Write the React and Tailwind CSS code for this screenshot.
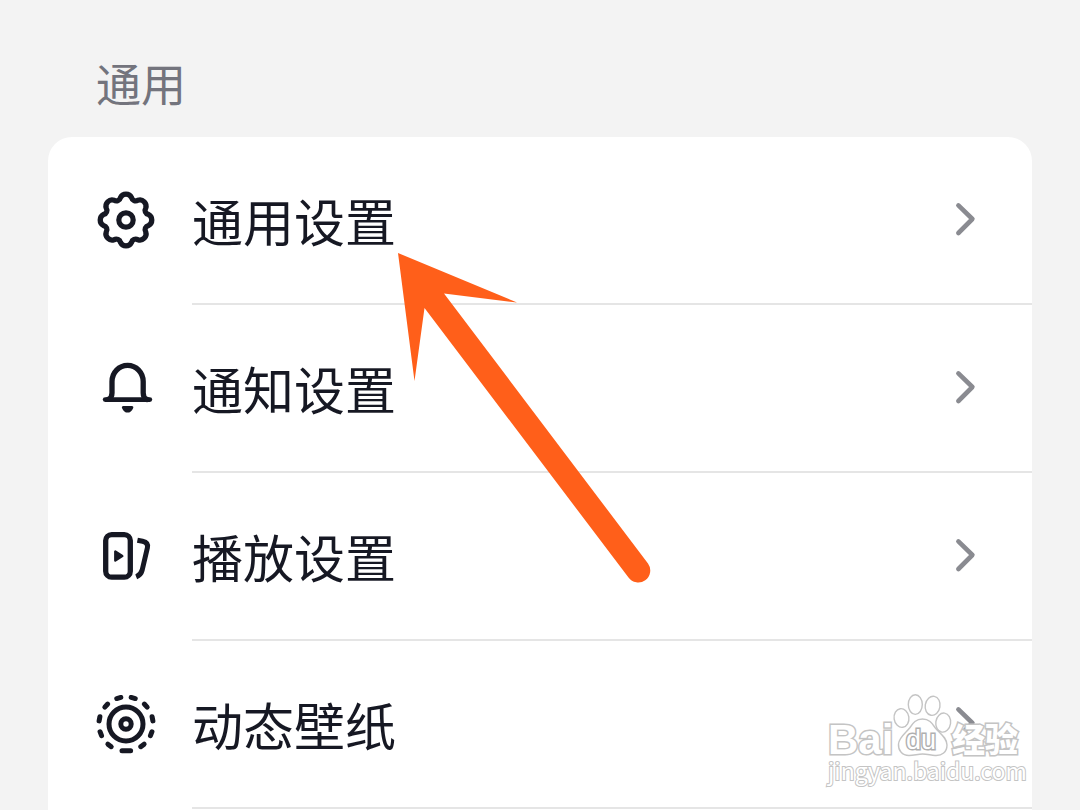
const cjk = "font-['Noto_Sans_CJK_SC',sans-serif]"

// eight round teeth around a centre of 30,30
const gearPath = () => {
    const at = (deg) => {
        const a = (deg * Math.PI) / 180
        return `${(30 + 23 * Math.cos(a)).toFixed(2)} ${(30 + 23 * Math.sin(a)).toFixed(2)}`
    }
    let d = `M${at(-14)}`
    for (let deg = 0; deg < 360; deg += 45) {
        d += `A6.2 6.2 0 0 1 ${at(deg + 14)}A4.2 4.2 0 0 0 ${at(deg + 31)}`
    }
    return `${d}Z`
}

function Icon({ children }) {
    return (
        <svg
            viewBox="0 1 60 60"
            className="size-15 shrink-0"
            fill="none"
            stroke="currentColor"
            strokeWidth="5.3"
            strokeLinecap="round"
            strokeLinejoin="round"
            aria-hidden="true"
        >
            {children}
        </svg>
    )
}

function GearIcon() {
    return (
        <Icon>
            <path d={gearPath()} />
            <circle cx="30" cy="30" r="7.2" strokeWidth="5.2" />
        </Icon>
    )
}

function BellIcon() {
    return (
        <Icon>
            <path d="M9.2 41.6H53.8" strokeWidth="4.8" />
            <path d="M12 41.4C15 40.4 16 38 16 35V23.5A15.6 16.2 0 0 1 47.2 23.5V35C47.2 38 48.2 40.4 51 41.4" />
            <path
                d="M27.4 48H35.8C37.2 48 37.8 49.2 37 50.4C35.8 53 34 54.6 31.6 54.6S27.4 53 26.2 50.4C25.4 49.2 26 48 27.4 48Z"
                fill="currentColor"
                stroke="none"
            />
        </Icon>
    )
}

function PlayIcon() {
    return (
        <Icon>
            <rect x="9.7" y="8.6" width="24.6" height="42.6" rx="6" />
            <path
                d="M19.3 25.6V34.6L26.3 30.1Z"
                fill="currentColor"
                strokeWidth="2.4"
            />
            <path
                d="M41.4 14.3L46.6 15.3C50.6 16.2 52.2 18.2 51.4 21.8L46.2 44C45.2 47.8 43.8 49.4 40.2 50.8"
                strokeWidth="5"
                strokeLinecap="butt"
            />
        </Icon>
    )
}

function LiveIcon() {
    return (
        <Icon>
            <circle cx="30" cy="30" r="17" strokeWidth="5" />
            <circle cx="30" cy="30" r="5.2" strokeWidth="5" />
            {[15.5, 47, 79, 111, 142.5, 217.5, 249, 281, 313, 344.5].map((deg) => (
                <path key={deg} d="M27.9 3H32.1" strokeWidth="5" transform={`rotate(${deg} 30 30)`} />
            ))}
            <path d="M26 56.8H34.6" strokeWidth="5" />
        </Icon>
    )
}

function Chevron() {
    return (
        <svg
            viewBox="0 0 24 40"
            className="h-10 w-6 shrink-0 text-[#8a8b91]"
            fill="none"
            stroke="currentColor"
            strokeWidth="4.6"
            strokeLinecap="round"
            strokeLinejoin="round"
            aria-hidden="true"
        >
            <path d="M6.4 5.4L20.4 19L6.4 33" />
        </svg>
    )
}

const rows = [
    { label: "通用设置", icon: GearIcon },
    { label: "通知设置", icon: BellIcon },
    { label: "播放设置", icon: PlayIcon },
    { label: "动态壁纸", icon: LiveIcon },
]

function Row({ label, icon: RowIcon }) {
    return (
        <li>
            <button type="button" className="flex w-full items-center gap-9 pl-12 text-left">
                <RowIcon />
                <span className="flex h-42 flex-1 items-center justify-between border-b-2 border-[#e5e5e5] pr-14">
                    <span className="text-[51px] leading-[60px]">{label}</span>
                    <Chevron />
                </span>
            </button>
        </li>
    )
}

function Arrow() {
    return (
        <svg
            viewBox="0 0 256 332"
            className="pointer-events-none absolute top-[252px] left-[396px] h-[332px] w-[256px]"
            aria-hidden="true"
        >
            <path
                d="M2 1L121 50.5L48 41.5L252 311.5A12 12 0 0 1 232.5 325.5L28.5 56L18.5 129Z"
                fill="#ff5f1a"
            />
        </svg>
    )
}

function Watermark() {
    return (
        <svg
            viewBox="0 0 210 100"
            className="pointer-events-none absolute right-[50px] bottom-[20px] h-[100px] w-[210px]"
            fill="#fff"
            stroke="#c4c4c4"
            strokeWidth="1.4"
        >
            <ellipse cx="81.5" cy="28" rx="7.4" ry="9.4" transform="rotate(-8 81.5 28)" />
            <ellipse cx="95.3" cy="14.6" rx="7" ry="9.8" />
            <ellipse cx="112.6" cy="15.8" rx="7.4" ry="9.6" transform="rotate(10 112.6 15.8)" />
            <ellipse cx="123.2" cy="32.6" rx="7.4" ry="9.6" transform="rotate(8 123.2 32.6)" />
            <path d="M102.500 29C109 29 112 33 115 37.500C119 43 127 47 127 55C127 62 122 66 115 65.500C110 65 107 64 102.500 64S94 65.500 89 65.500C82 65.500 78 60 78.500 54C79 47 86 43 90 37.500C93 33 96 29 102.500 29Z" />
            <g className="font-['Liberation_Sans',sans-serif]" fontWeight="700">
                <text x="8" y="64" fontSize="42" strokeWidth="3" paintOrder="stroke">
                    Bai
                </text>
                <text x="86" y="59" fontSize="27" fontWeight="400" stroke="#b0b0b0" strokeWidth="3" paintOrder="stroke">
                    du
                </text>
            </g>
            <text
                x="132"
                y="62"
                fontSize="33"
                fontWeight="900"
                strokeWidth="3"
                paintOrder="stroke"
                className={cjk}
            >
                经验
            </text>
            <text
                x="8"
                y="90"
                fontSize="23"
                strokeWidth="2"
                paintOrder="stroke"
                className="font-['Noto_Sans_CJK_SC',sans-serif]"
            >
                jingyan.baidu.com
            </text>
        </svg>
    )
}

export default function App() {
    return (
        <main
            className={`relative flex h-screen flex-col overflow-hidden bg-[#f3f3f3] px-12 pt-[53px] text-[#161823] ${cjk}`}
        >
            <h2 className="mb-6 pl-12 text-[45px] leading-[60px] text-[#73747d]">通用</h2>
            <ul className="flex-1 rounded-t-3xl bg-white">
                {rows.map((row) => (
                    <Row key={row.label} {...row} />
                ))}
            </ul>
            <Arrow />
            <Watermark />
        </main>
    )
}
